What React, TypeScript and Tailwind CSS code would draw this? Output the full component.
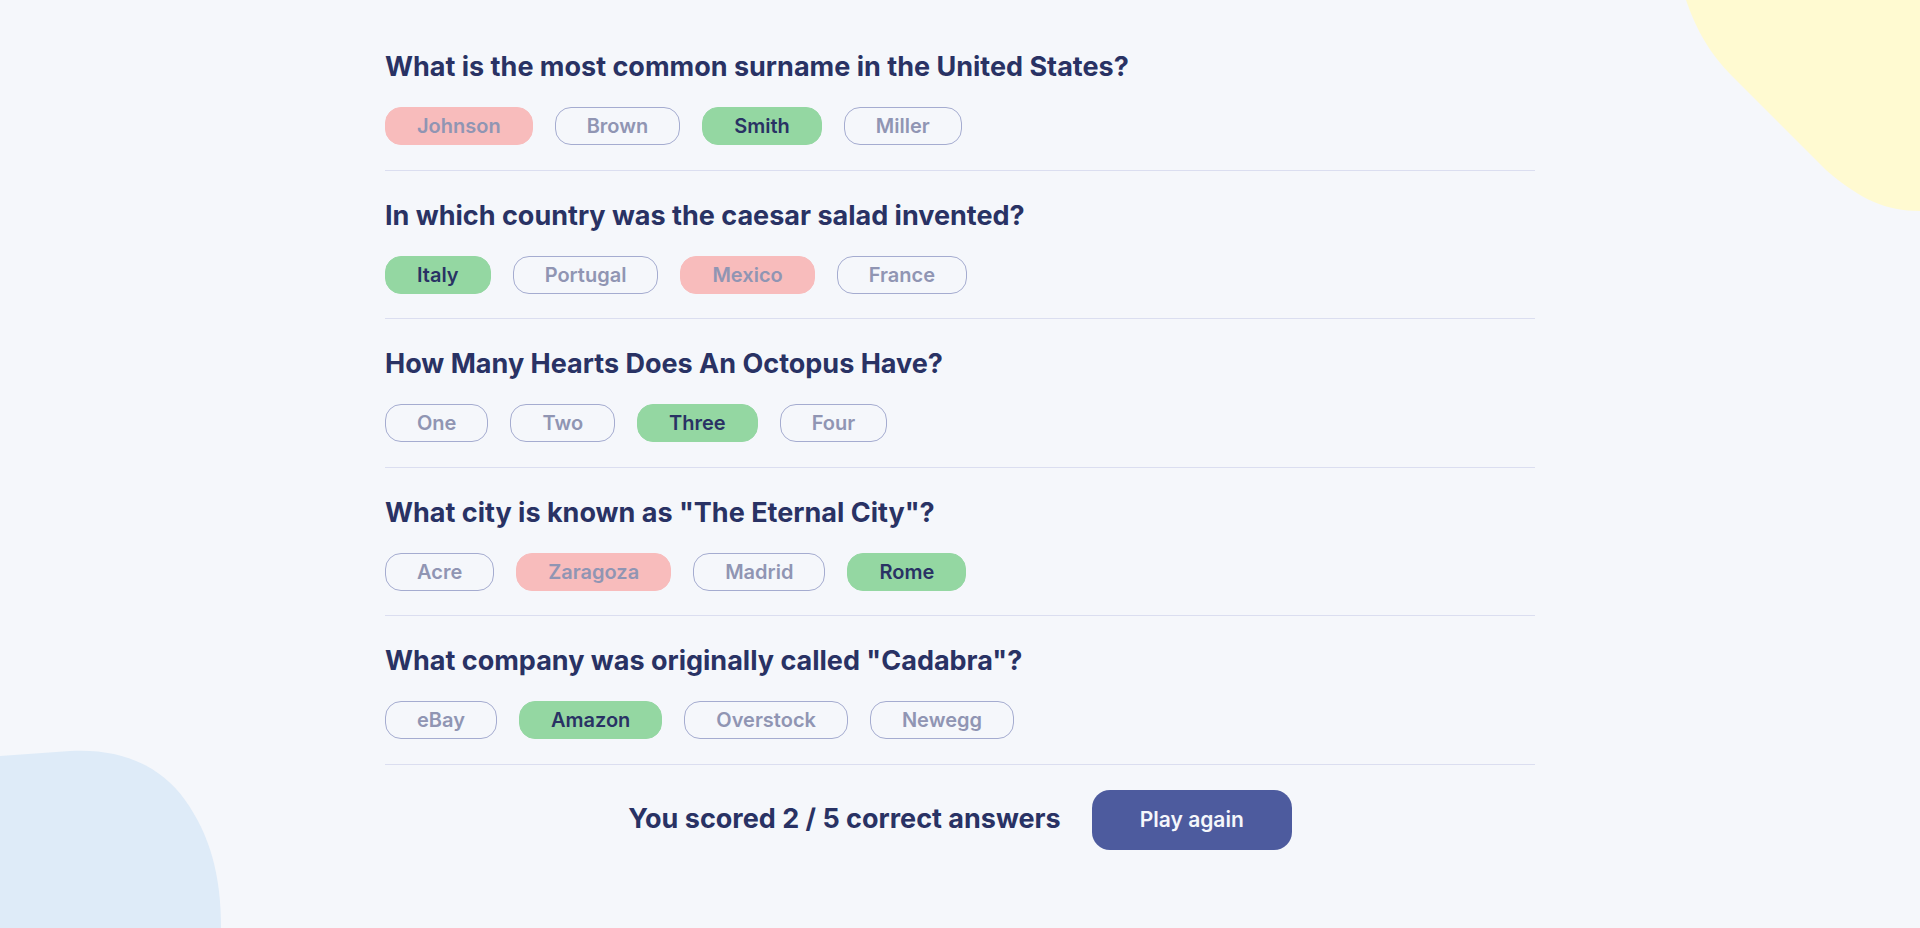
import React from 'react';

type Answer = { text: string; state: 'correct' | 'wrong' | 'idle' };

const questions: { question: string; answers: Answer[] }[] = [
  {
    question: 'What is the most common surname in the United States?',
    answers: [
      { text: 'Johnson', state: 'wrong' },
      { text: 'Brown', state: 'idle' },
      { text: 'Smith', state: 'correct' },
      { text: 'Miller', state: 'idle' },
    ],
  },
  {
    question: 'In which country was the caesar salad invented?',
    answers: [
      { text: 'Italy', state: 'correct' },
      { text: 'Portugal', state: 'idle' },
      { text: 'Mexico', state: 'wrong' },
      { text: 'France', state: 'idle' },
    ],
  },
  {
    question: 'How Many Hearts Does An Octopus Have?',
    answers: [
      { text: 'One', state: 'idle' },
      { text: 'Two', state: 'idle' },
      { text: 'Three', state: 'correct' },
      { text: 'Four', state: 'idle' },
    ],
  },
  {
    question: 'What city is known as "The Eternal City"?',
    answers: [
      { text: 'Acre', state: 'idle' },
      { text: 'Zaragoza', state: 'wrong' },
      { text: 'Madrid', state: 'idle' },
      { text: 'Rome', state: 'correct' },
    ],
  },
  {
    question: 'What company was originally called "Cadabra"?',
    answers: [
      { text: 'eBay', state: 'idle' },
      { text: 'Amazon', state: 'correct' },
      { text: 'Overstock', state: 'idle' },
      { text: 'Newegg', state: 'idle' },
    ],
  },
];

const answerStyles = {
  correct: 'bg-[#94d7a2] border-[#94d7a2] text-[#293264]',
  wrong: 'bg-[#f8bcbc] border-[#f8bcbc] text-[#9095b3]',
  idle: 'bg-transparent border-[#a5acd0] text-[#9095b3]',
};

export default function App() {
  return (
    <div className="relative min-h-screen overflow-hidden bg-[#f5f7fb] font-['Inter',sans-serif]">
      {/* decorative blobs */}
      <svg className="absolute top-0 right-0" width="234" height="212" viewBox="0 0 234 212">
        <path d="M0 0 C10 30 25 55 45 75 L140 170 C175 200 200 211 234 211 L234 0 Z" fill="#fffad1" />
      </svg>
      <svg className="absolute bottom-0 left-0" width="222" height="178" viewBox="0 0 222 178">
        <path d="M0 6 L70 1 C120 -2 160 15 185 50 C210 85 221 125 221 178 L0 178 Z" fill="#deebf8" />
      </svg>

      <div className="relative mx-auto w-[1150px] pt-[22px]">
        {questions.map((q, i) => (
          <div key={i} className="border-b border-[#dbdef0] pt-[29px] pb-[24.5px]">
            <h2 className="text-[27px] leading-[32px] font-bold text-[#293264]">{q.question}</h2>
            <div className="mt-[24px] flex gap-[22px]">
              {q.answers.map((a, j) => (
                <button
                  key={j}
                  className={`h-[38px] rounded-[16px] border px-[31px] text-[20px] font-semibold ${answerStyles[a.state]}`}
                >
                  {a.text}
                </button>
              ))}
            </div>
          </div>
        ))}

        <div className="mt-[25px] flex items-center justify-center gap-[31px]">
          <p className="text-[27px] font-bold text-[#293264]">You scored 2 / 5 correct answers</p>
          <button className="h-[60px] w-[200px] rounded-[18px] bg-[#4d5b9e] text-[21px] font-semibold text-[#f5f7fb]">
            Play again
          </button>
        </div>
      </div>
    </div>
  );
}
